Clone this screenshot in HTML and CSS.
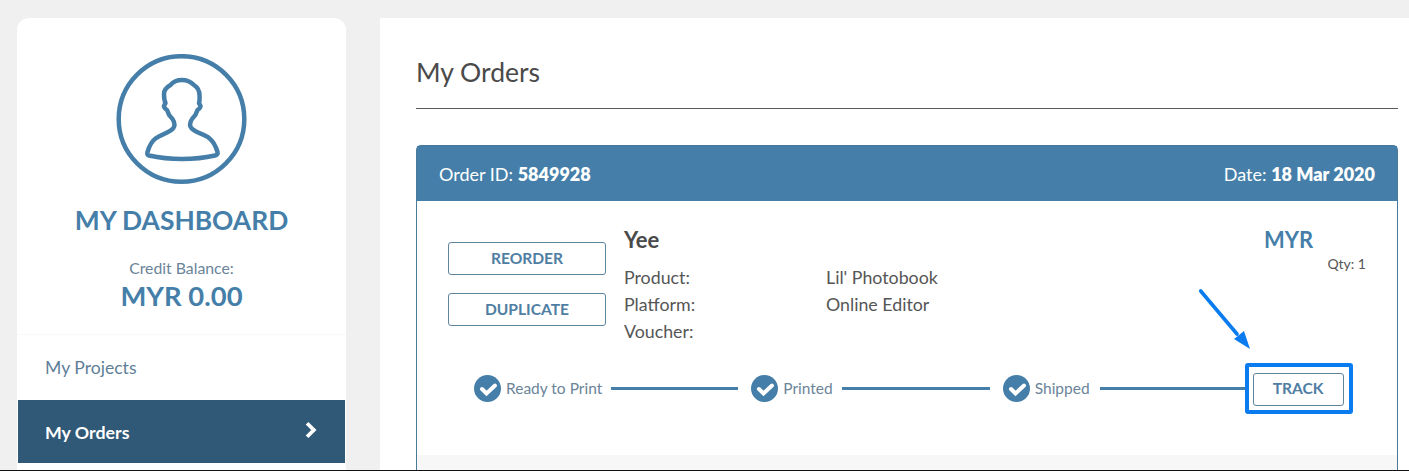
FILE: index.html
```html
<!DOCTYPE html>
<html lang="en">

<head>
  <meta charset="UTF-8" />
  <title>My Orders</title>
  <link rel="stylesheet" href="styles.css">
</head>

<body>
  <div class="page">
    <aside class="sidebar">
      <div class="profile">
        <svg class="avatar" viewBox="0 0 132 132" fill="none" stroke="#457fa9">
          <circle cx="65.500" cy="65" r="62.800" stroke-width="4.500" />
          <path stroke-width="4.500" stroke-linejoin="round"
            d="M66 26C71 26 75 28 78 31C81 33 83.500 37 83.500 41C83.500 44 84 47 83 49L84.500 52C84.500 54 83 55 81.500 56C80.500 60 78 63 76 65C74.500 67 74 69 74 71C74 74 77 76 81 78C85 80 90 81 93 84C97 87 100 93 101.500 98C102 100 100.500 101 99 101.500C90 103.500 78 105 66 105C54 105 42 103.500 33 101.500C31.500 101 31 100 31.500 98C33 93 36 87 39.500 84.500C43 82 48 80 52 78C56 76 58.500 74 58.500 71C58.500 69 58 67 56.500 65C54.500 63 52 60 51 56C49.500 55 48 54 48 52L49.500 49C48.500 47 48 44 48 40C48 36 51 33 54.500 31C57 28 61 26 66 26Z" />
        </svg>
        <h2 class="title">MY DASHBOARD</h2>
        <p class="credit-label">Credit Balance:</p>
        <p class="credit-value">MYR 0.00</p>
      </div>
      <nav class="side-nav">
        <a class="nav-item">My Projects</a>
        <a class="nav-item active">My Orders
          <svg class="chevron" viewBox="0 0 12 16" fill="none" stroke="#fff" stroke-width="3.400">
            <path d="M2.500 2l6 6-6 6" />
          </svg>
        </a>
      </nav>
    </aside>

    <main class="content">
      <h1 class="heading">My Orders</h1>
      <section class="order">
        <header class="order-head">
          <span>Order ID: <b>5849928</b></span>
          <span>Date: <b>18 Mar 2020</b></span>
        </header>
        <div class="order-body">
          <div class="order-top">
            <div class="actions">
              <button class="btn">REORDER</button>
              <button class="btn">DUPLICATE</button>
            </div>
            <div class="details">
              <h3 class="name">Yee</h3>
              <dl class="info">
                <dt>Product:</dt>
                <dd>Lil' Photobook</dd>
                <dt>Platform:</dt>
                <dd>Online Editor</dd>
                <dt>Voucher:</dt>
                <dd></dd>
              </dl>
            </div>
            <div class="price">
              <div class="currency">MYR</div>
              <div class="qty">Qty: 1</div>
            </div>
          </div>
          <div class="tracker">
            <span class="step">
              <svg class="check" viewBox="0 0 27 27">
                <circle cx="13.500" cy="13.500" r="13.500" fill="#457fa9" />
                <path d="M8 14l4.500 4.500 8.500-8" fill="none" stroke="#fff" stroke-width="4" stroke-linecap="round" />
              </svg>
              Ready to Print
            </span>
            <span class="line line-1"></span>
            <span class="step">
              <svg class="check" viewBox="0 0 27 27">
                <circle cx="13.500" cy="13.500" r="13.500" fill="#457fa9" />
                <path d="M8 14l4.500 4.500 8.500-8" fill="none" stroke="#fff" stroke-width="4" stroke-linecap="round" />
              </svg>
              Printed
            </span>
            <span class="line line-2"></span>
            <span class="step">
              <svg class="check" viewBox="0 0 27 27">
                <circle cx="13.500" cy="13.500" r="13.500" fill="#457fa9" />
                <path d="M8 14l4.500 4.500 8.500-8" fill="none" stroke="#fff" stroke-width="4" stroke-linecap="round" />
              </svg>
              Shipped
            </span>
            <span class="line line-3"></span>
            <span class="track-box">
              <button class="btn btn-track">TRACK</button>
              <svg class="arrow" viewBox="0 0 56 66">
                <path d="M4.700 5L41 48" fill="none" stroke="#0a7cf0" stroke-width="3.600" stroke-linecap="round" />
                <path d="M54 63L38 53l10-8z" fill="#0a7cf0" />
              </svg>
            </span>
          </div>
        </div>
        <div class="order-foot"></div>
      </section>
    </main>
  </div>
</body>

</html>
```

FILE: styles.css
```css
html,
body {
  margin: 0;
  padding: 0;
}

body {
  height: 471px;
  overflow: hidden;
  background-color: #f0f0f0;
  color: #555;
  font-family: "Lato", "Liberation Sans", sans-serif;
  box-sizing: border-box;
  border-bottom: 1px solid #111;
}

.page {
  display: flex;
  align-items: flex-start;
  gap: 34px;
  padding: 18px 0 0 17px;
}

.sidebar {
  width: 329px;
  height: 452px;
  flex: none;
  background-color: #fff;
  border-radius: 12px 12px 0 0;
}

.profile {
  padding: 36px 0 23px;
  text-align: center;
  border-bottom: 1px solid #f8f8f8;
}

.avatar {
  display: block;
  width: 132px;
  height: 132px;
  margin: 0 auto;
}

.title {
  margin: 18px 0 0;
  color: #457fa9;
  font-size: 26.400px;
  line-height: 32px;
  font-weight: 700;
}

.credit-label {
  margin: 23px 0 0;
  color: #6b8499;
  font-size: 15.800px;
  line-height: 18px;
}

.credit-value {
  margin: 4px 0 0;
  color: #457fa9;
  font-size: 27.400px;
  line-height: 30px;
  font-weight: 700;
}

.nav-item {
  display: flex;
  align-items: center;
  justify-content: space-between;
  height: 65px;
  padding: 0 28px;
  color: #5f7f99;
  font-size: 17.600px;
}

.nav-item.active {
  height: 63px;
  margin: 0 1px;
  padding: 0 27px;
  background-color: #305877;
  color: #fff;
  font-size: 17.800px;
  font-weight: 700;
}

.chevron {
  width: 14px;
  height: 18px;
  margin-top: -4px;
}

.content {
  flex: 1;
  height: 452px;
  padding: 0 11px 0 36px;
  background-color: #fff;
}

.heading {
  margin: 0;
  padding: 39px 0 21px;
  border-bottom: 1px solid #5a5a5a;
  color: #4a4a4a;
  font-size: 26.500px;
  line-height: 30px;
  font-weight: 400;
}

.order {
  margin-top: 36px;
  border: 1px solid #4a7a9a;
  border-bottom: 0;
  border-radius: 5px 5px 0 0;
}

.order-head {
  display: flex;
  justify-content: space-between;
  align-items: center;
  height: 55px;
  padding: 0 22px;
  background-color: #457fa9;
  color: #fff;
  font-size: 18px;
}

.order-head b {
  font-weight: 800;
}

.order-body {
  padding: 28px 31px 0;
  height: 254px;
  box-sizing: border-box;
}

.order-top {
  display: flex;
  align-items: flex-start;
}

.actions {
  display: flex;
  flex-direction: column;
  gap: 18px;
  width: 176px;
  flex: none;
  padding-top: 13px;
}

.btn {
  display: block;
  width: 158px;
  height: 33px;
  padding: 0 0 2px;
  background-color: #fff;
  border: 1px solid #5f84a0;
  border-radius: 3px;
  color: #4f7ea3;
  font-family: inherit;
  font-size: 15.600px;
  font-weight: 700;
}

.details {
  flex: 1;
}

.name {
  margin: 0 0 13px;
  color: #4a4a4a;
  font-size: 22px;
  line-height: 22px;
  font-weight: 700;
}

.info {
  display: grid;
  grid-template-columns: 202px 1fr;
  grid-auto-rows: 27px;
  margin: 0;
  font-size: 17.800px;
  line-height: 27px;
}

.info dd {
  margin: 0;
}

.price {
  width: 102px;
  flex: none;
}

.currency {
  color: #457fa9;
  font-size: 22px;
  line-height: 22px;
  font-weight: 700;
}

.qty {
  margin-top: 4px;
  font-size: 14px;
  text-align: right;
  line-height: 18px;
}

.tracker {
  display: flex;
  align-items: center;
  height: 52px;
  margin-top: 17px;
  padding-left: 26px;
}

.step {
  display: flex;
  align-items: center;
  gap: 5px;
  color: #6b8499;
  font-size: 15.500px;
  white-space: nowrap;
}

.check {
  width: 27px;
  height: 27px;
}

.line {
  height: 3px;
  margin: 0 13px 0 9px;
  background-color: #457fa9;
}

.line-1 {
  width: 127px;
}

.line-2 {
  width: 148px;
}

.line-3 {
  width: 145px;
  margin: 0 0 0 10px;
}

.track-box {
  position: relative;
  padding: 6px 5px 4px 4px;
  border: 4px solid #0a7cf0;
  border-radius: 3px;
}

.btn-track {
  width: 91px;
}

.arrow {
  position: absolute;
  left: -53px;
  top: -81px;
  width: 56px;
  height: 66px;
}

.order-foot {
  height: 15px;
  background-color: #f7f7f7;
}
```
